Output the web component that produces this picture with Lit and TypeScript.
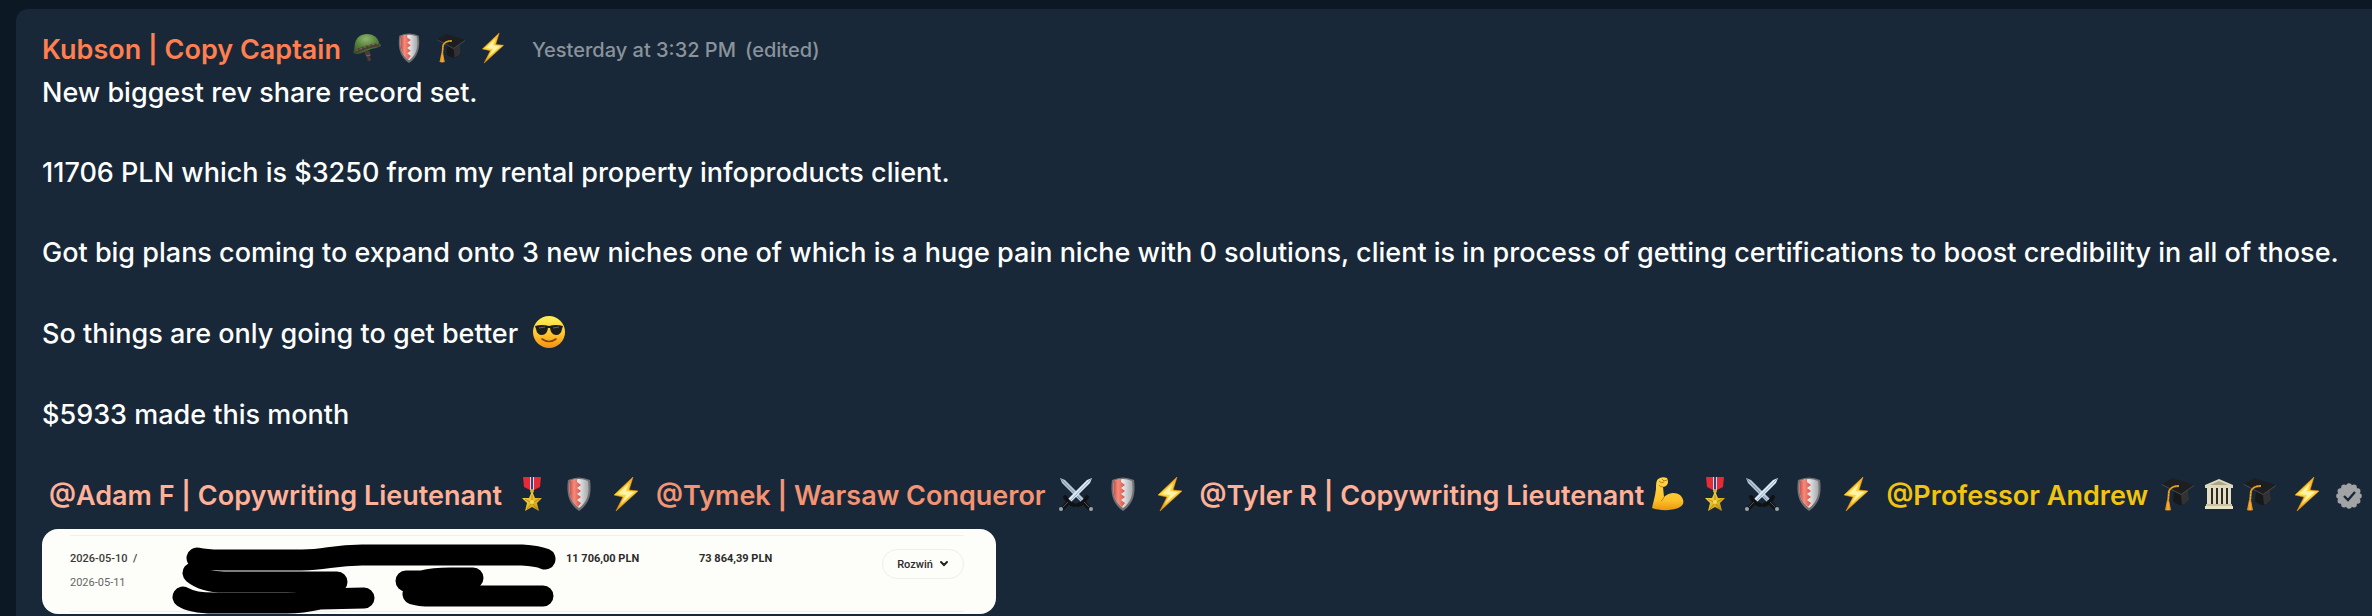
import { LitElement, css, html, svg } from 'lit'
import { customElement, property } from 'lit/decorators.js'

const icons: Record<string, any> = {
  helmet: svg`
    <defs>
      <radialGradient id="dome" cx="0.45" cy="0.25" r="0.8">
        <stop offset="0" stop-color="#8fb56b" />
        <stop offset="0.5" stop-color="#55803b" />
        <stop offset="1" stop-color="#2f5226" />
      </radialGradient>
    </defs>
    <path d="M14 21 L20 20 L21 25 L20 27 L22 31 L18 32 L17 27 L15 25 Z" fill="#4d3b38" />
    <path d="M16 26 L21 25" stroke="#8a6a60" stroke-width="1" />
    <path d="M2 23 C1 22 3 18 3 14 C4 5 10 1 17 1 C25 1 30 6 31 12 L33 14 C32 17 25 17 20 19 C14 21 10 24 5 24 Z" fill="url(#dome)" />
    <path d="M3 21 C10 19 16 15 31 13" stroke="#4b3f33" stroke-width="4" fill="none" />
    <path d="M4 20 C11 18 17 14 30 12" stroke="#86765e" stroke-width="1" stroke-dasharray="3 2" fill="none" />`,
  shield: svg`
    <defs>
      <linearGradient id="steel" x1="0" x2="1">
        <stop offset="0" stop-color="#ffffff" />
        <stop offset="0.55" stop-color="#dfe1e3" />
        <stop offset="1" stop-color="#a5a8ab" />
      </linearGradient>
      <linearGradient id="crimson" x1="0" x2="1">
        <stop offset="0" stop-color="#c9493e" />
        <stop offset="0.4" stop-color="#f58c7e" />
        <stop offset="1" stop-color="#d8523f" />
      </linearGradient>
    </defs>
    <path d="M6 3 Q17 -2 28 3 C30 17 27 27 17 34 C7 27 4 17 6 3 Z" fill="#707173" />
    <path d="M8 4 Q17 0 26 4 C28 17 25 25 17 31 C9 25 6 17 8 4 Z" fill="url(#steel)" />
    <path d="M8 4 Q12 2 15 2 L15 5 L19 8 L15 11 L19 14 L15 17 L19 20 L15 23 L19 26 L16 30 C9 25 6 17 8 4 Z" fill="url(#crimson)" />`,
  cap: svg`
    <path d="M13 14 L12 24 Q17 29 22 28 Q27 26 28 22 L27 12 Z" fill="#17181a" />
    <path d="M20 18 L21 28 Q27 26 28 22 L27 12 Z" fill="#303235" />
    <path d="M1 7 L12 1 L33 8 L20 18 Z" fill="#1d1e20" />
    <path d="M1 7 L20 17 L33 8 L33 9 L20 18 L1 8 Z" fill="#494b4e" />
    <ellipse cx="17" cy="9" rx="2" ry="1" fill="#08090a" />
    <path d="M18 9 Q10 9 8 14 L7 25" stroke="#c98516" stroke-width="2" fill="none" />
    <path d="M18 9 Q10 9 8 14 L7 25" stroke="#f3b73e" stroke-width="1" stroke-dasharray="2 1" fill="none" />
    <path d="M6 23 L8 23 L10 33 Q7 34 4 33 Z" fill="#e8921c" />
    <path d="M7 25 L7 33" stroke="#f9bd52" stroke-width="1" />`,
  bolt: svg`
    <defs>
      <linearGradient id="spark" x1="0" x2="0" y1="0" y2="1">
        <stop offset="0" stop-color="#ffb01f" />
        <stop offset="0.5" stop-color="#ffd93b" />
        <stop offset="1" stop-color="#f59a11" />
      </linearGradient>
    </defs>
    <path d="M24 0 L5 18 L14 20 L7 34 L29 14 L20 13 Z" fill="url(#spark)" stroke="#ee9810" stroke-width="0.6" />
    <path d="M20 6 L9 17 L17 18 L12 27 L25 15 L17 14 Z" fill="#fff3a6" />`,
  medal: svg`
    <defs>
      <linearGradient id="gold" x1="0" x2="1" y1="0" y2="1">
        <stop offset="0" stop-color="#fbe267" />
        <stop offset="0.5" stop-color="#e8bd28" />
        <stop offset="1" stop-color="#b98712" />
      </linearGradient>
    </defs>
    <path d="M8 0 H26 L25 10 L19 13 H15 L9 10 Z" fill="#e52b35" />
    <path d="M15 0 H19 V13 H15 Z" fill="#dcd6e6" />
    <path d="M16 0 H18 V13 H16 Z" fill="#3b3f80" />
    <circle cx="17" cy="14" r="2" fill="#dcae29" />
    <path d="M17 14 L20 21 L27 21 L22 26 L24 34 L17 30 L10 34 L12 26 L7 21 L14 21 Z" fill="url(#gold)" />
    <path d="M17 18 L17 26 L24 22 M17 26 L22 32 M17 26 L12 32 M17 26 L10 22" stroke="#a77a12" stroke-width="0.7" fill="none" />
    <circle cx="17" cy="25" r="2" fill="#f8da54" />`,
  swords: svg`
    <path d="M1 1 L6 3 L26 23 L23 26 L3 6 Z" fill="#b4c8dc" />
    <path d="M2 2 L24 25" stroke="#7e8b99" stroke-width="1" />
    <path d="M33 1 L28 3 L8 23 L11 26 L31 6 Z" fill="#dde9f4" />
    <path d="M32 2 L10 25" stroke="#94a5b6" stroke-width="1" />
    <path d="M19 28 Q24 27 28 20 M15 28 Q10 27 6 20" stroke="#0f1113" stroke-width="4" fill="none" stroke-linecap="round" />
    <path d="M24 25 L31 32 M10 25 L3 32" stroke="#111315" stroke-width="4" />
    <path d="M25 25 L30 30 M9 25 L4 30" stroke="#4b4f54" stroke-width="1" />
    <circle cx="32" cy="32" r="2" fill="#9ca4ab" />
    <circle cx="2" cy="32" r="2" fill="#9ca4ab" />`,
  muscle: svg`
    <defs>
      <linearGradient id="skin" x1="0" x2="0" y1="0" y2="1">
        <stop offset="0" stop-color="#ffd84f" />
        <stop offset="0.7" stop-color="#fdc229" />
        <stop offset="1" stop-color="#e9960f" />
      </linearGradient>
    </defs>
    <path d="M1 31 C2 26 4 20 5 12 C5 7 5 4 7 2 Q11 -1 16 1 Q18 5 16 8 Q14 10 12 10 L13 20 C18 15 25 15 29 18 C34 23 33 28 29 30 C22 34 9 34 1 31 Z" fill="url(#skin)" />
    <path d="M13 20 Q12 23 10 24 M8 4 Q10 7 13 5 M11 2 L13 4 L16 3 M12 10 Q9 10 8 8" stroke="#c47a0d" stroke-width="1" fill="none" />`,
  bank: svg`
    <path d="M3 8 L17 2 L31 8 V11 H3 Z" fill="#ded9bc" />
    <path d="M8 8 L17 4 L26 8 Z" fill="#aca587" />
    <path d="M5 11 H29 V28 H5 Z" fill="#2e2b25" />
    <path d="M5 11 h4 v17 h-4 Z M11 11 h3 v17 h-3 Z M16 11 h3 v17 h-3 Z M21 11 h3 v17 h-3 Z M26 11 h3 v17 h-3 Z" fill="#e2ddc4" />
    <path d="M4 27 H30 V29 H4 Z" fill="#c9c3a4" />
    <path d="M3 29 H31 V32 H3 Z" fill="#e6e1c7" />`,
  cool: svg`
    <defs>
      <linearGradient id="face" x1="0" x2="0" y1="0" y2="1">
        <stop offset="0" stop-color="#fff15a" />
        <stop offset="0.55" stop-color="#ffc72e" />
        <stop offset="1" stop-color="#f58f12" />
      </linearGradient>
    </defs>
    <circle cx="17" cy="17" r="16" fill="url(#face)" />
    <path d="M3 11 Q10 9 17 11 Q24 9 31 11 L30 14 Q29 20 24 20 Q19 20 18 13 H16 Q15 20 10 20 Q5 20 4 14 Z" fill="#1c1d1f" />
    <path d="M7 13 L13 12 M21 13 L27 12" stroke="#62666b" stroke-width="1" />
    <path d="M10 24 Q17 29 24 24" stroke="#7c4310" stroke-width="1.6" fill="none" stroke-linecap="round" />`,
}

const lobes = Array.from({ length: 12 }, (_, i) => {
  const a = (i * Math.PI) / 6
  return { x: 13 + 10 * Math.cos(a), y: 13 + 10 * Math.sin(a) }
})

@customElement('emoji-icon')
export class EmojiIcon extends LitElement {
  @property() name = ''

  render() {
    return html`<svg class="glyph" viewBox="0 0 34 34" role="img" aria-label=${this.name}>${icons[this.name]}</svg>`
  }

  static styles = css`
    :host {
      display: inline-flex;
      flex: none;
      width: 34px;
      padding-bottom: 4px;
    }
    .glyph {
      display: block;
      width: 100%;
      overflow: visible;
    }
  `
}

interface Mention {
  name: string
  tone: string
  // a leading "-" puts the emoji closer to the one before it
  emojis: string[]
  verified?: boolean
}

const mentions: Mention[] = [
  { name: 'Adam F | Copywriting Lieutenant', tone: 'lieutenant', emojis: ['medal', 'shield', 'bolt'] },
  { name: 'Tymek | Warsaw Conqueror', tone: 'conqueror', emojis: ['swords', 'shield', 'bolt'] },
  { name: 'Tyler R | Copywriting Lieutenant', tone: 'lieutenant', emojis: ['-muscle', 'medal', 'swords', 'shield', 'bolt'] },
  { name: 'Professor Andrew', tone: 'professor', emojis: ['cap', '-bank', '-cap', 'bolt'], verified: true },
]

@customElement('payment-card')
export class PaymentCard extends LitElement {
  render() {
    return html`
      <table class="payments">
        <tr>
          <td class="dates">
            <div class="first">2026-05-10 &nbsp;/</div>
            <div class="second">2026-05-11</div>
          </td>
          <td class="hidden-text">
            <svg class="ink" viewBox="0 0 384 75" width="384" height="75" aria-hidden="true">
              <g fill="none" stroke="#000" stroke-width="21" stroke-linecap="round" stroke-linejoin="round">
                <path d="M25 22 Q34 24 48 24 H130 C155 24 160 19 190 19 H350 Q366 20 373 23" />
                <path d="M21 37 Q32 46 52 46 H130 L165 46" />
                <path d="M11 61 Q20 67 42 67 H115 Q130 67 148 63 L192 62" />
                <path d="M234 45 H250 Q262 42 278 42 H301" />
                <path d="M241 58 Q247 60 260 60 H350 L371 60" />
              </g>
            </svg>
          </td>
          <td class="amount">11 706,00 PLN</td>
          <td class="balance">73 864,39 PLN</td>
          <td class="action">
            <button class="expand" type="button">
              Rozwiń
              <svg viewBox="0 0 10 8" width="10" height="8" aria-hidden="true">
                <path d="M2 2 L5 5 L8 2" fill="none" stroke="#222" stroke-width="2" stroke-linecap="round" />
              </svg>
            </button>
          </td>
        </tr>
      </table>
    `
  }

  static styles = css`
    :host {
      display: block;
      box-sizing: border-box;
      max-width: 954px;
      padding: 6px 32px 2px 28px;
      border-radius: 16px;
      background: #fdfef9;
      color: #2b2b2b;
      font: 11px/24px Roboto, sans-serif;
    }
    .payments {
      width: 100%;
      border-collapse: separate;
      border-spacing: 0;
      border-top: 1px solid #f0f1ed;
      border-bottom: 1px solid #f0f1ed;
    }
    td {
      padding: 11px 0 0;
      vertical-align: top;
      white-space: nowrap;
    }
    .dates {
      width: 102px;
    }
    .first {
      color: #3a3a3a;
      font-weight: 500;
    }
    .second {
      color: #666;
    }
    .hidden-text {
      width: 394px;
      padding: 0;
    }
    .ink {
      display: block;
      overflow: visible;
    }
    .amount,
    .balance {
      font-weight: 700;
    }
    .amount {
      width: 133px;
    }
    .action {
      width: 82px;
      padding-top: 13px;
    }
    .expand {
      display: flex;
      align-items: center;
      justify-content: center;
      gap: 6px;
      box-sizing: border-box;
      width: 82px;
      height: 30px;
      padding: 0;
      border: 1px solid #eeefeb;
      border-radius: 15px;
      background: none;
      color: #2b2b2b;
      font: 500 11px Roboto, sans-serif;
    }
  `
}

@customElement('app-root')
export class AppRoot extends LitElement {
  renderMention(m: Mention) {
    return html`
      <span class="mention">
        <a class="handle ${m.tone}" href="#">@${m.name}</a>
        ${m.emojis.map((e) =>
          e.startsWith('-')
            ? html`<emoji-icon class="tight" name=${e.slice(1)}></emoji-icon>`
            : html`<emoji-icon name=${e}></emoji-icon>`
        )}
        ${m.verified
          ? html`<svg class="verified" viewBox="0 0 26 26" role="img" aria-label="verified">
              <g fill="#a2a3a4">
                <circle cx="13" cy="13" r="11" />
                ${lobes.map((p) => svg`<circle cx=${p.x} cy=${p.y} r="2.8" />`)}
              </g>
              <path d="M8 13 L12 17 L19 9" fill="none" stroke="#182838" stroke-width="2.4" />
            </svg>`
          : ''}
      </span>
    `
  }

  render() {
    return html`
      <article class="message">
        <header class="head">
          <a class="author" href="#">Kubson | Copy Captain</a>
          <span class="ranks">
            ${['helmet', 'shield', 'cap', 'bolt'].map((e) => html`<emoji-icon class="small" name=${e}></emoji-icon>`)}
          </span>
          <time class="meta">Yesterday at 3:32 PM</time>
          <span class="meta">(edited)</span>
        </header>
        <div class="body">
          <p>New biggest rev share record set.</p>
          <p>11706 PLN which is $3250 from my rental property infoproducts client.</p>
          <p>
            Got big plans coming to expand onto 3 new niches one of which is a huge pain niche with 0 solutions, client is
            in process of getting certifications to boost credibility in all of those.
          </p>
          <p class="with-emoji">So things are only going to get better <emoji-icon name="cool"></emoji-icon></p>
          <p>$5933 made this month</p>
          <div class="mentions">${mentions.map((m) => this.renderMention(m))}</div>
        </div>
        <payment-card></payment-card>
      </article>
    `
  }

  static styles = css`
    :host {
      display: flex;
      box-sizing: border-box;
      min-height: 100vh;
      padding: 9px 0 0 16px;
      background: #0c1823;
      color: #fff;
      font: 500 27px/40px Inter, sans-serif;
    }
    .message {
      flex: 1;
      min-width: 0;
      padding: 20px 4px 2px 26px;
      border-top-left-radius: 12px;
      background: #182838;
    }
    .head {
      display: flex;
      align-items: center;
      min-height: 42px;
      margin-bottom: 2px;
    }
    .author {
      color: #ff7f50;
      font-weight: 600;
      text-decoration: none;
    }
    .ranks {
      display: flex;
      gap: 12px;
      margin: 0 24px 0 11px;
    }
    .small {
      width: 30px;
    }
    .meta {
      margin-right: 9px;
      color: #8a939b;
      font-size: 20px;
    }
    .body {
      display: flex;
      flex-direction: column;
      gap: 40px;
      margin-bottom: 12px;
    }
    p {
      margin: 0;
    }
    .with-emoji {
      display: flex;
      align-items: center;
      gap: 14px;
      min-height: 42px;
    }
    .mentions {
      display: flex;
      flex-wrap: wrap;
      column-gap: 13px;
      padding-left: 7px;
    }
    .mention {
      display: flex;
      align-items: center;
      min-height: 42px;
    }
    .mention emoji-icon {
      margin-left: 13px;
    }
    .mention .tight {
      margin-left: 7px;
    }
    .verified {
      width: 26px;
      margin-left: 12px;
    }
    .handle {
      font-weight: 600;
      text-decoration: none;
      white-space: nowrap;
    }
    .lieutenant {
      color: #ffb199;
    }
    .conqueror {
      color: #f39474;
    }
    .professor {
      color: #f1c40f;
    }
  `
}
